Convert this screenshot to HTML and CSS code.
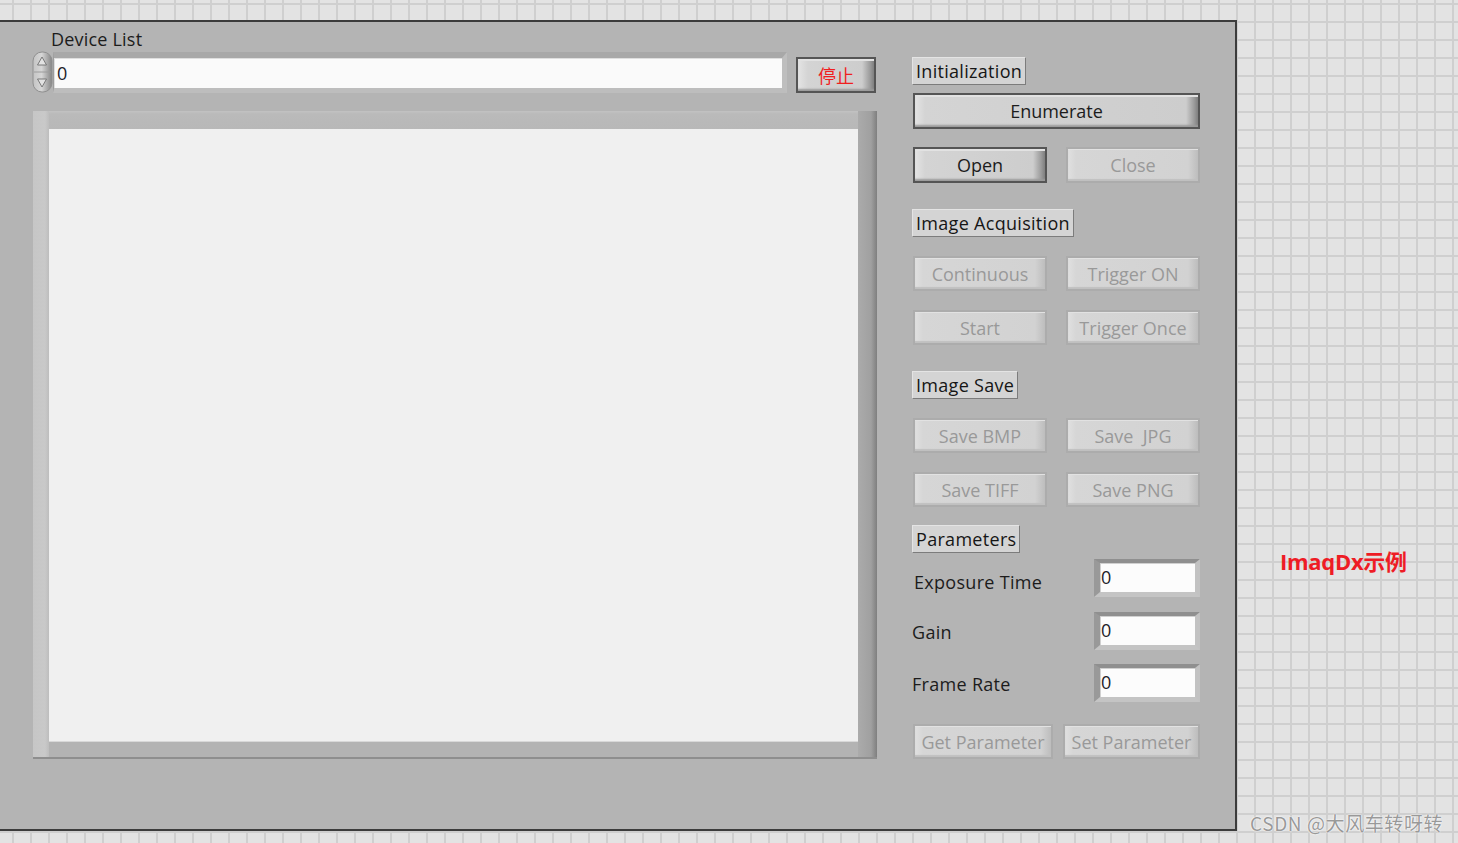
FILE: index.html
```html
<!DOCTYPE html>
<html lang="en">
<head>
<meta charset="utf-8">
<title>ImaqDx示例</title>
<link rel="stylesheet" href="styles.css">
</head>
<body>
<div class="canvas">
  <div class="panel">
    <div class="left-col">
      <div class="ctl-label">Device List</div>
      <div class="device-row">
        <svg class="spinner" width="21" height="42" viewBox="0 0 21 42">
          <defs>
            <linearGradient id="sg" x1="0" y1="0" x2="1" y2="0">
              <stop offset="0" stop-color="#c4c4c4"/>
              <stop offset="0.45" stop-color="#d6d6d6"/>
              <stop offset="1" stop-color="#858585"/>
            </linearGradient>
          </defs>
          <rect x="1" y="1" width="19" height="40" rx="9" ry="9" fill="url(#sg)" stroke="#909090"/>
          <line x1="2" y1="21" x2="19" y2="21" stroke="#9c9c9c"/>
          <path d="M10 6 L14.5 14 L5.5 14 Z" fill="#e2e2e2" stroke="#6e6e6e" stroke-width="0.9"/>
          <path d="M10 36 L14.5 28 L5.5 28 Z" fill="#e2e2e2" stroke="#6e6e6e" stroke-width="0.9"/>
        </svg>
        <div class="text-field"><span>0</span></div>
        <div class="btn stop-btn">停止</div>
      </div>
      <div class="display">
        <div class="display-inner"></div>
      </div>
    </div>
    <div class="right-col">
      <div class="tag tag-init">Initialization</div>
      <div class="btn btn-wide">Enumerate</div>
      <div class="btn-row row-open">
        <div class="btn btn-half">Open</div>
        <div class="btn btn-half disabled">Close</div>
      </div>
      <div class="tag tag-section">Image Acquisition</div>
      <div class="btn-row row-first">
        <div class="btn btn-half disabled">Continuous</div>
        <div class="btn btn-half disabled">Trigger ON</div>
      </div>
      <div class="btn-row row-next">
        <div class="btn btn-half disabled">Start</div>
        <div class="btn btn-half disabled">Trigger Once</div>
      </div>
      <div class="tag tag-section">Image Save</div>
      <div class="btn-row row-first">
        <div class="btn btn-half disabled">Save BMP</div>
        <div class="btn btn-half disabled">Save&nbsp;&nbsp;JPG</div>
      </div>
      <div class="btn-row row-next">
        <div class="btn btn-half disabled">Save TIFF</div>
        <div class="btn btn-half disabled">Save PNG</div>
      </div>
      <div class="tag tag-params">Parameters</div>
      <div class="param-row param-1">
        <div class="param-label exp">Exposure Time</div>
        <div class="num-field"><span>0</span></div>
      </div>
      <div class="param-row param-2">
        <div class="param-label">Gain</div>
        <div class="num-field"><span>0</span></div>
      </div>
      <div class="param-row param-3">
        <div class="param-label">Frame Rate</div>
        <div class="num-field"><span>0</span></div>
      </div>
      <div class="btn-row row-params">
        <div class="btn disabled btn-get">Get Parameter</div>
        <div class="btn disabled btn-set">Set Parameter</div>
      </div>
    </div>
  </div>
  <div class="free-text">ImaqDx示例</div>
  <div class="watermark">CSDN @大风车转呀转</div>
</div>
</body>
</html>
```

FILE: styles.css
```css
html, body {
  margin: 0;
  padding: 0;
}

body {
  width: 1458px;
  height: 843px;
  overflow: hidden;
  background-color: #e3e3e3;
  background-image:
    linear-gradient(to right, #cfcfcf 2px, transparent 2px),
    linear-gradient(to bottom, #cfcfcf 2px, transparent 2px);
  background-size: 18px 18px;
  background-position: 12px 3px;
  font-family: "Open Sans", "Noto Sans", "Noto Sans CJK SC", sans-serif;
  color: #1c1c1c;
}

.canvas {
  position: relative;
  box-sizing: border-box;
  width: 1458px;
  height: 843px;
  padding-top: 20px;
}

.panel {
  box-sizing: border-box;
  width: 1237px;
  height: 811px;
  background: #b4b4b4;
  border-top: 2px solid #3c3c3c;
  border-right: 2px solid #3c3c3c;
  border-bottom: 2px solid #3c3c3c;
  display: flex;
  align-items: flex-start;
  gap: 36px;
  padding: 6px 0 0 33px;
}

/* ---------- left column ---------- */
.left-col {
  width: 844px;
  display: flex;
  flex-direction: column;
}

.ctl-label {
  margin-left: 18px;
  font-size: 18px;
  line-height: 22px;
  height: 22px;
  margin-bottom: 2px;
  letter-spacing: 0.2px;
}

.device-row {
  display: flex;
  align-items: flex-start;
  height: 41px;
}

.spinner {
  display: block;
  margin-left: -1px;
  margin-top: -1px;
  flex: none;
}

.text-field {
  box-sizing: border-box;
  flex: none;
  width: 734px;
  height: 41px;
  background: #fafafa;
  border-top: 6px solid #a8a8a8;
  border-bottom: 5px solid #bdbdbd;
  border-right: 5px solid #bebebe;
  border-left: 1px solid #9c9c9c;
  box-shadow: inset 1px 1px 0 #dedede;
  font-size: 18px;
  line-height: 30px;
  padding-left: 3px;
  color: #1e1e2a;
}

.display {
  box-sizing: border-box;
  margin-top: 18px;
  width: 844px;
  height: 648px;
  padding: 18px 19px 16px 16px;
  border-bottom: 2px solid #8e8e8e;
  background:
    linear-gradient(to right, transparent calc(100% - 19px), #ababab calc(100% - 19px), #a0a0a0 calc(100% - 6px), #7f7f7f 100%),
    linear-gradient(to right, #c6c6c6 0, #c9c9c9 12px, #bdbdbd 16px, transparent 16px),
    linear-gradient(to bottom, #c2c2c2 0, #bababa 3px, #b8b8b8 18px, #b3b3b3 18px);
}

.display-inner {
  width: 100%;
  height: 100%;
  background: #f0f0f0;
  box-shadow: 0 1px 0 #d8d8d8;
}

/* ---------- buttons ---------- */
.btn {
  box-sizing: border-box;
  display: flex;
  align-items: center;
  justify-content: center;
  font-size: 18px;
  color: #1c1c1c;
  border: 2px solid #555555;
  background:
    linear-gradient(to right, #e4e4e4 0, #d4d4d4 10px, #cdcdcd calc(100% - 12px), #9c9c9c calc(100% - 4px), #7e7e7e 100%);
  box-shadow: inset 0 2px 0 #e2e2e2, inset 0 -3px 2px -1px #9a9a9a;
  white-space: nowrap;
}

.btn.disabled {
  color: #999999;
  border: 2px solid #acacac;
  background:
    linear-gradient(to right, #e0e0e0 0, #d6d6d6 8px, #d2d2d2 calc(100% - 10px), #bdbdbd 100%);
  box-shadow: inset 0 1px 0 #e2e2e2, inset 0 -2px 1px #c0c0c0;
}

.stop-btn {
  flex: none;
  width: 80px;
  height: 36px;
  margin-top: 5px;
  margin-left: 9px;
  color: #f01f1f;
  font-family: "Noto Sans CJK SC", sans-serif;
  font-size: 18px;
}

/* ---------- right column ---------- */
.right-col {
  width: 287px;
  display: flex;
  flex-direction: column;
}

.tag {
  box-sizing: border-box;
  align-self: flex-start;
  height: 28px;
  margin-left: -1px;
  padding: 0 3px;
  font-size: 18px;
  line-height: 26px;
  letter-spacing: 0.3px;
  background: #d4d4d4;
  border-top: 1px solid #e4e4e4;
  border-left: 1px solid #e4e4e4;
  border-right: 1px solid #7c7c7c;
  border-bottom: 1px solid #7c7c7c;
  color: #161616;
}

.tag-init { margin-top: 29px; }
.tag-section { margin-top: 26px; }
.tag-params { margin-top: 18px; }

.btn-wide {
  margin-top: 8px;
  height: 36px;
  width: 287px;
}

.btn-row {
  display: flex;
  justify-content: space-between;
  height: 35px;
}

.row-open { margin-top: 18px; height: 36px; }
.row-first { margin-top: 19px; }
.row-next { margin-top: 19px; }

.btn-half {
  width: 134px;
}

.param-row {
  display: flex;
  justify-content: space-between;
  align-items: center;
  height: 38px;
}

.param-1 { margin-top: 6px; }
.param-2 { margin-top: 15px; }
.param-3 { margin-top: 14px; }

.param-label {
  font-size: 18px;
  padding-top: 1px;
  margin-left: -1px;
  letter-spacing: 0.3px;
}

.param-label.exp {
  margin-left: 1px;
  padding-top: 8px;
}

.num-field {
  box-sizing: border-box;
  width: 106px;
  height: 38px;
  background: #fcfcfc;
  border-top: 4px solid #8f8f8f;
  border-left: 6px solid #999999;
  border-right: 5px solid #c2c2c2;
  border-bottom: 5px solid #c4c4c4;
  box-shadow: inset 1px 1px 0 #d0d0d0;
  font-size: 18px;
  line-height: 28px;
  padding-left: 1px;
  color: #1e1e2a;
}

.row-params {
  margin-top: 22px;
}

.btn-get { width: 140px; }
.btn-set { width: 137px; }

/* ---------- free canvas decorations ---------- */
.free-text {
  position: absolute;
  left: 1280px;
  top: 546px;
  font-family: "Open Sans", "Noto Sans CJK SC", sans-serif;
  font-weight: 700;
  font-size: 22px;
  line-height: 30px;
  color: #ee1c25;
  letter-spacing: -0.3px;
}

.watermark {
  position: absolute;
  left: 1250px;
  top: 809px;
  font-family: "Noto Sans CJK SC", sans-serif;
  font-size: 19px;
  line-height: 28px;
  letter-spacing: 0.6px;
  color: rgba(120, 120, 120, 0.75);
  text-shadow: 0 0 2px #ffffff, 0 0 1px #ffffff;
}
```
